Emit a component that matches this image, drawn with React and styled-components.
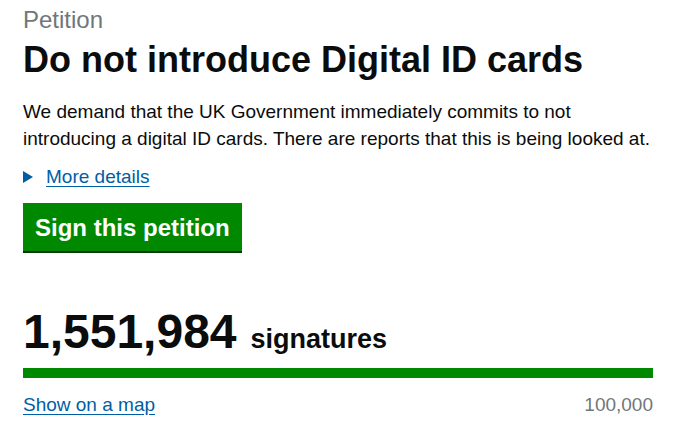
import React from "react";
import styled, { createGlobalStyle } from "styled-components";

const GlobalStyle = createGlobalStyle`
  html, body {
    margin: 0;
    padding: 0;
    background: #ffffff;
  }
  body {
    font-family: "Liberation Sans", Arial, sans-serif;
    color: #0b0c0c;
  }
`;

const Main = styled.main`
  width: 630px;
  padding: 6px 23px 0;
  display: flex;
  flex-direction: column;
`;

const Caption = styled.span`
  font-size: 24px;
  line-height: 28px;
  color: #6f777b;
`;

const Title = styled.h1`
  font-size: 36px;
  line-height: 40px;
  font-weight: 700;
  margin: 6px 0 0;
`;

const Summary = styled.p`
  font-size: 19px;
  line-height: 27px;
  margin: 18px 0 0;
`;

const Details = styled.div`
  display: flex;
  align-items: center;
  gap: 13px;
  margin-top: 12px;
`;

const Arrow = styled.span`
  width: 0;
  height: 0;
  border-style: solid;
  border-width: 6px 0 6px 10px;
  border-color: transparent transparent transparent #005ea5;
`;

const Link = styled.a`
  font-size: 19px;
  line-height: 25px;
  color: #005ea5;
  text-decoration: underline;
  text-underline-offset: 3px;
  cursor: pointer;
`;

const Button = styled.button`
  align-self: flex-start;
  margin-top: 14px;
  padding: 9px 12px 8px;
  border: none;
  border-radius: 0;
  background: #008800;
  box-shadow: 0 2px 0 #003a00;
  color: #ffffff;
  font-family: "Liberation Sans", Arial, sans-serif;
  font-size: 24px;
  line-height: 31px;
  font-weight: 700;
  cursor: pointer;
`;

const Count = styled.div`
  display: flex;
  align-items: baseline;
  gap: 14px;
  margin-top: 55px;
`;

const Number = styled.span`
  font-size: 48px;
  line-height: 52px;
  font-weight: 700;
`;

const Unit = styled.span`
  font-size: 27px;
  font-weight: 700;
`;

const Bar = styled.div`
  height: 10px;
  margin-top: 10px;
  background: #bfc1c3;
`;

const Fill = styled.div`
  height: 100%;
  background: #008800;
`;

const Footer = styled.div`
  display: flex;
  justify-content: space-between;
  align-items: baseline;
  margin-top: 14px;
`;

const Target = styled.span`
  font-size: 19px;
  color: #6f777b;
`;

export default function App() {
  const signatures = 1551984;
  const target = 100000;
  const pct = Math.min(100, (signatures / target) * 100);
  return (
    <>
      <GlobalStyle />
      <Main>
        <Caption>Petition</Caption>
        <Title>Do not introduce Digital ID cards</Title>
        <Summary>
          We demand that the UK Government immediately commits to not
          introducing a digital ID cards. There are reports that this is being
          looked at.
        </Summary>
        <Details>
          <Arrow />
          <Link>More details</Link>
        </Details>
        <Button>Sign this petition</Button>
        <Count>
          <Number>{signatures.toLocaleString("en-GB")}</Number>
          <Unit>signatures</Unit>
        </Count>
        <Bar>
          <Fill style={{ width: pct + "%" }} />
        </Bar>
        <Footer>
          <Link>Show on a map</Link>
          <Target>{target.toLocaleString("en-GB")}</Target>
        </Footer>
      </Main>
    </>
  );
}
